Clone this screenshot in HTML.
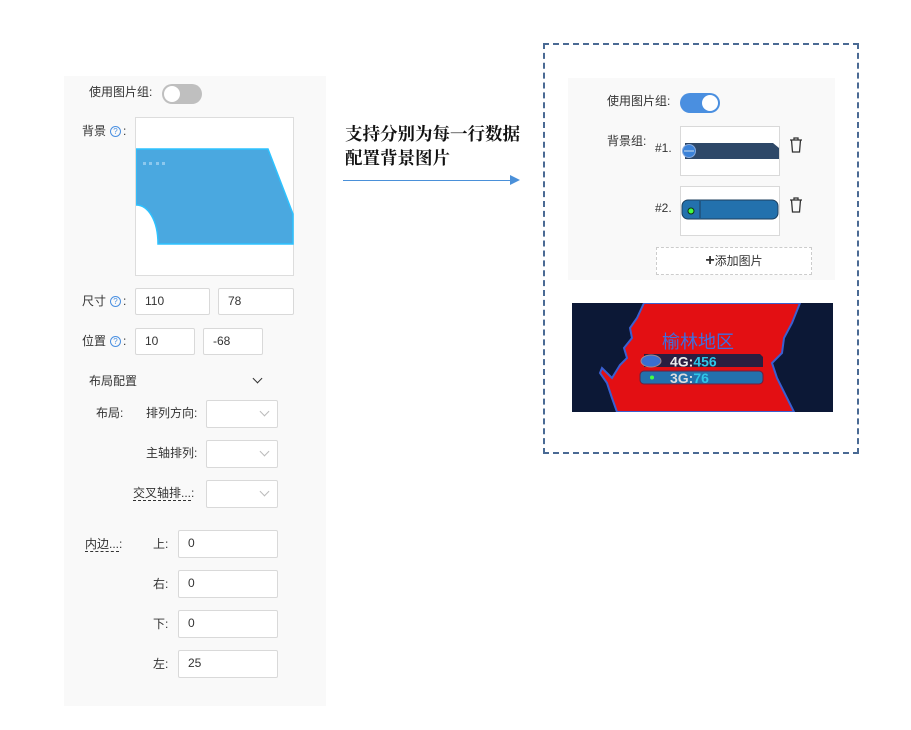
<!DOCTYPE html>
<html><head><meta charset="utf-8">
<style>
*{margin:0;padding:0;box-sizing:border-box}
body{width:911px;height:730px;background:#fff;position:relative;overflow:hidden;font-family:"Liberation Sans","Noto Sans CJK SC",sans-serif;font-size:12px;color:#333}
.a{position:absolute}
.t{position:absolute;line-height:16px;white-space:nowrap}
.in{position:absolute;background:#fff;border:1px solid #d9d9d9;border-radius:2px;padding-left:9px;line-height:25px;font-size:12px;color:#333}
.sel{position:absolute;background:#fff;border:1px solid #d9d9d9;border-radius:2px}
.sel:after{content:"";position:absolute;right:9px;top:7px;width:6px;height:6px;border-right:1px solid #bbb;border-bottom:1px solid #bbb;transform:rotate(45deg)}
.q{display:inline-block;width:11px;height:11px;border:1px solid #4a90e2;border-radius:50%;color:#4a90e2;font-size:8px;line-height:9px;text-align:center;vertical-align:1px;margin:0 2px 0 4px}
.dot{border-bottom:1px dashed #333}
</style></head><body>
<div class="a" style="left:64px;top:76px;width:262px;height:630px;background:#f9f9f9"></div>
<div class="t" style="left:89px;top:84px">使用图片组:</div>
<div class="a" style="left:162px;top:84px;width:40px;height:20px;border-radius:10px;background:#bfbfbf"></div>
<div class="a" style="left:164px;top:86px;width:16px;height:16px;border-radius:50%;background:#fff"></div>
<div class="t" style="left:82px;top:123px">背景<span class="q">?</span>:</div>
<div class="a" style="left:135px;top:117px;width:159px;height:159px;background:#fff;border:1px solid #ddd"></div>
<svg class="a" style="left:136px;top:148px" width="158" height="98">
<path d="M0 1 H132 L157 66 V96 H22 C22 72 12 57 0 57 Z" fill="#4aa8e0" stroke="#2dc2ff" stroke-width="1.5"/>
<g fill="#8cc8ee"><rect x="7" y="14" width="3" height="3"/><rect x="13" y="14" width="3" height="3"/><rect x="20" y="14" width="3" height="3"/><rect x="26" y="14" width="3" height="3"/></g>
</svg>
<div class="t" style="left:82px;top:293px">尺寸<span class="q">?</span>:</div>
<div class="in" style="left:135px;top:288px;width:75px;height:27px">110</div>
<div class="in" style="left:218px;top:288px;width:76px;height:27px">78</div>
<div class="t" style="left:82px;top:333px">位置<span class="q">?</span>:</div>
<div class="in" style="left:135px;top:328px;width:60px;height:27px">10</div>
<div class="in" style="left:203px;top:328px;width:60px;height:27px">-68</div>
<div class="t" style="left:89px;top:373px">布局配置</div>
<div class="a" style="left:254px;top:375px;width:7px;height:7px;border-right:1.3px solid #333;border-bottom:1.3px solid #333;transform:rotate(45deg)"></div>
<div class="t" style="left:96px;top:405px">布局:</div>
<div class="t" style="left:146px;top:405px">排列方向:</div>
<div class="sel" style="left:206px;top:400px;width:72px;height:28px"></div>
<div class="t" style="left:146px;top:445px">主轴排列:</div>
<div class="sel" style="left:206px;top:440px;width:72px;height:28px"></div>
<div class="t" style="left:133px;top:485px"><span class="dot">交叉轴排...</span>:</div>
<div class="sel" style="left:206px;top:480px;width:72px;height:28px"></div>
<div class="t" style="left:85px;top:536px"><span class="dot">内边...</span>:</div>
<div class="t" style="left:153px;top:536px">上:</div>
<div class="in" style="left:178px;top:530px;width:100px;height:28px">0</div>
<div class="t" style="left:153px;top:576px">右:</div>
<div class="in" style="left:178px;top:570px;width:100px;height:28px">0</div>
<div class="t" style="left:153px;top:616px">下:</div>
<div class="in" style="left:178px;top:610px;width:100px;height:28px">0</div>
<div class="t" style="left:153px;top:656px">左:</div>
<div class="in" style="left:178px;top:650px;width:100px;height:28px">25</div>

<div class="t" style="left:345px;top:122px;font-family:'Noto Serif CJK SC',serif;font-weight:bold;font-size:17.5px;line-height:24px;color:#111">支持分别为每一行数据<br>配置背景图片</div>
<div class="a" style="left:343px;top:180px;width:168px;height:1px;background:#4a90d9"></div>
<div class="a" style="left:510px;top:175px;width:0;height:0;border-left:10px solid #4a90d9;border-top:5px solid transparent;border-bottom:5px solid transparent"></div>

<div class="a" style="left:543px;top:43px;width:316px;height:411px;border:2px dashed #4a6a94"></div>
<div class="a" style="left:568px;top:78px;width:267px;height:202px;background:#f9f9f9"></div>
<div class="t" style="left:607px;top:93px">使用图片组:</div>
<div class="a" style="left:680px;top:93px;width:40px;height:20px;border-radius:10px;background:#4a8fe0"></div>
<div class="a" style="left:702px;top:95px;width:16px;height:16px;border-radius:50%;background:#fff"></div>
<div class="t" style="left:607px;top:133px">背景组:</div>
<div class="t" style="left:655px;top:140px">#1.</div>
<div class="a" style="left:680px;top:126px;width:100px;height:50px;background:#fff;border:1px solid #d9d9d9"></div>
<svg class="a" style="left:681px;top:142px" width="98" height="20"><path d="M4 1H92L98 6V17H4Z" fill="#2e4868"/><circle cx="8" cy="9" r="6.5" fill="#3b82d8" stroke="#8ad" stroke-width="1"/><path d="M3 9H13" stroke="#cde" stroke-width="1"/></svg>
<div class="t" style="left:655px;top:200px">#2.</div>
<div class="a" style="left:680px;top:186px;width:100px;height:50px;background:#fff;border:1px solid #d9d9d9"></div>
<svg class="a" style="left:681px;top:199px" width="98" height="22"><rect x="1" y="1" width="96" height="19" rx="6" fill="#2371ad" stroke="#1e3f5e"/><path d="M19 2V19" stroke="#1e3f5e"/><circle cx="10" cy="12" r="3" fill="#4f4" stroke="#131"/></svg>
<svg class="a" style="left:789px;top:137px" width="14" height="16"><path d="M1 3H13M5 3V1H9V3M2.5 3L3.5 15H10.5L11.5 3" fill="none" stroke="#333" stroke-width="1.3"/></svg>
<svg class="a" style="left:789px;top:197px" width="14" height="16"><path d="M1 3H13M5 3V1H9V3M2.5 3L3.5 15H10.5L11.5 3" fill="none" stroke="#333" stroke-width="1.3"/></svg>
<div class="a" style="left:656px;top:247px;width:156px;height:28px;background:#fff;border:1px dashed #ccc;text-align:center;line-height:26px;font-size:12px"><b style="font-size:16px">+</b>添加图片</div>

<svg class="a" style="left:572px;top:303px" width="261" height="109">
<rect width="261" height="109" fill="#0c1836"/>
<path d="M72 0H228L220 20L212 35L210 50L200 60L205 75L215 95L222 109H45L40 95L35 80L28 70L30 65L40 75L48 62L55 55L52 45L60 35L58 25L65 15Z" fill="#e30f13" stroke="#3a5fd0" stroke-width="2"/>
<text x="90" y="45" fill="#3e6ee0" font-size="18" font-family="Liberation Sans,Noto Sans CJK SC,sans-serif">榆林地区</text>
<path d="M72 51H188L191 54V64H72Z" fill="#2a1e40"/>
<ellipse cx="79" cy="58" rx="10" ry="6" fill="#3b6fd0" stroke="#a88" />
<text x="98" y="63.5" fill="#eee" font-size="14" font-weight="bold" font-family="Liberation Sans,sans-serif">4G:<tspan fill="#2ec6e8">456</tspan></text>
<rect x="68" y="68" width="123" height="13" rx="4" fill="#2371ad" stroke="#6a2040"/>
<circle cx="80" cy="74.5" r="2" fill="#4f4"/>
<text x="98" y="80" fill="#ddd" font-size="14" font-weight="bold" font-family="Liberation Sans,sans-serif">3G:<tspan fill="#2ec6e8">76</tspan></text>
</svg>
</body></html>
